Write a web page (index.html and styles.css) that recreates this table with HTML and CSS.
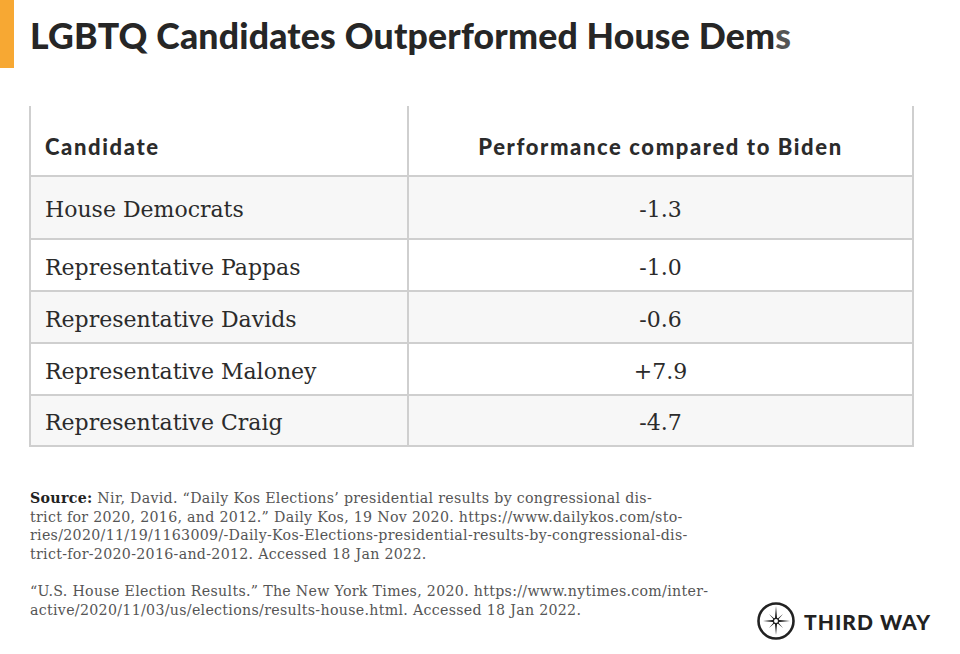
FILE: index.html
```html
<!DOCTYPE html>
<html lang="en">
<head>
<meta charset="utf-8">
<title>LGBTQ Candidates Outperformed House Dems</title>
<link rel="stylesheet" href="styles.css">
</head>
<body>
<div class="page">
  <header class="head">
    <div class="bar"></div>
    <h1 class="title">LGBTQ Candidates Outperformed House Dem<span class="fade">s</span></h1>
  </header>

  <table class="data">
    <colgroup><col class="col1"><col class="col2"></colgroup>
    <thead>
      <tr><th class="c1">Candidate</th><th class="c2">Performance compared to Biden</th></tr>
    </thead>
    <tbody>
      <tr class="first shade"><td class="c1">House Democrats</td><td class="c2">-1.3</td></tr>
      <tr><td class="c1">Representative Pappas</td><td class="c2">-1.0</td></tr>
      <tr class="shade"><td class="c1">Representative Davids</td><td class="c2">-0.6</td></tr>
      <tr><td class="c1">Representative Maloney</td><td class="c2">+7.9</td></tr>
      <tr class="shade last"><td class="c1">Representative Craig</td><td class="c2">-4.7</td></tr>
    </tbody>
  </table>

  <footer class="foot">
    <div class="source">
      <p><b>Source:</b> Nir, David. “Daily Kos Elections’ presidential results by congressional dis-<br>trict for 2020, 2016, and 2012.” Daily Kos, 19 Nov 2020. https://www.dailykos.com/sto-<br>ries/2020/11/19/1163009/-Daily-Kos-Elections-presidential-results-by-congressional-dis-<br>trict-for-2020-2016-and-2012. Accessed 18 Jan 2022.</p>
      <p>“U.S. House Election Results.” The New York Times, 2020. https://www.nytimes.com/inter-<br>active/2020/11/03/us/elections/results-house.html. Accessed 18 Jan 2022.</p>
    </div>
    <div class="logo">
      <svg class="mark" width="40" height="40" viewBox="0 0 40 40" aria-hidden="true">
        <circle cx="20" cy="20" r="17.5" fill="none" stroke="#222" stroke-width="2.6"/>
        <polygon points="20,5 21.2,18.8 34,20 21.2,21.2 20,34 18.8,21.2 7,20 18.8,18.8" fill="#222"/>
        <polygon points="27,13 21,20 27,27 20,21 13,27 19,20 13,13 20,19" fill="#222"/>
        <circle cx="20" cy="20" r="2.6" fill="#fff" stroke="#222" stroke-width="1.2"/>
      </svg>
      <span class="brand">THIRD WAY</span>
    </div>
  </footer>
</div>
</body>
</html>
```

FILE: styles.css
```css
html, body {
  margin: 0;
  padding: 0;
  background: #ffffff;
}

.page {
  width: 960px;
  height: 654px;
  box-sizing: border-box;
  overflow: hidden;
}

.head {
  display: flex;
  align-items: center;
  gap: 16px;
  height: 68px;
}

.bar {
  width: 14px;
  height: 68px;
  background: #f7a833;
  flex: none;
}

.title {
  margin: 0;
  font-family: "Lato", "DejaVu Sans", sans-serif;
  font-weight: 900;
  font-size: 35.6px;
  color: #262626;
  letter-spacing: 0.2px;
  white-space: nowrap;
  padding-top: 2px;
}

.fade {
  color: #555;
}

.data {
  margin: 38px 0 0 29px;
  width: 885px;
  border-collapse: collapse;
  table-layout: fixed;
}

.col1 {
  width: 378px;
}

.data th, .data td {
  border: 2px solid #cfcfcf;
  padding: 0 14px;
  color: #2b2b2b;
}

.data thead th {
  border-top: none;
  height: 70px;
  font-family: "Lato", "DejaVu Sans", sans-serif;
  font-weight: 900;
  font-size: 22px;
  letter-spacing: 1.6px;
  padding-top: 12px;
  box-sizing: border-box;
}

.data .c1 {
  text-align: left;
}

.data .c2 {
  text-align: center;
}

.data td {
  font-family: "DejaVu Serif", "Liberation Serif", serif;
  font-size: 22px;
  height: 52px;
  padding-top: 4px;
  box-sizing: border-box;
}

.data tr.first td {
  height: 63px;
}

.data tr.last td {
  height: 51px;
}

.data tr.shade td {
  background: #f7f7f7;
}

.foot {
  display: flex;
  justify-content: space-between;
  align-items: flex-end;
  margin: 42px 29px 0 30px;
}

.source {
  font-family: "DejaVu Serif", "Liberation Serif", serif;
  font-size: 14.2px;
  letter-spacing: 0.3px;
  line-height: 18.5px;
  color: #555;
  white-space: nowrap;
}

.source p {
  margin: 0 0 19px 0;
}

.source p:last-child {
  margin-bottom: 0;
}

.source b {
  color: #222;
}

.logo {
  display: flex;
  align-items: center;
  gap: 8px;
  margin-bottom: -22px;
}

.mark {
  display: block;
}

.brand {
  font-family: "Lato", "DejaVu Sans", sans-serif;
  font-weight: 900;
  font-size: 21px;
  color: #222;
  letter-spacing: 1px;
}
```
